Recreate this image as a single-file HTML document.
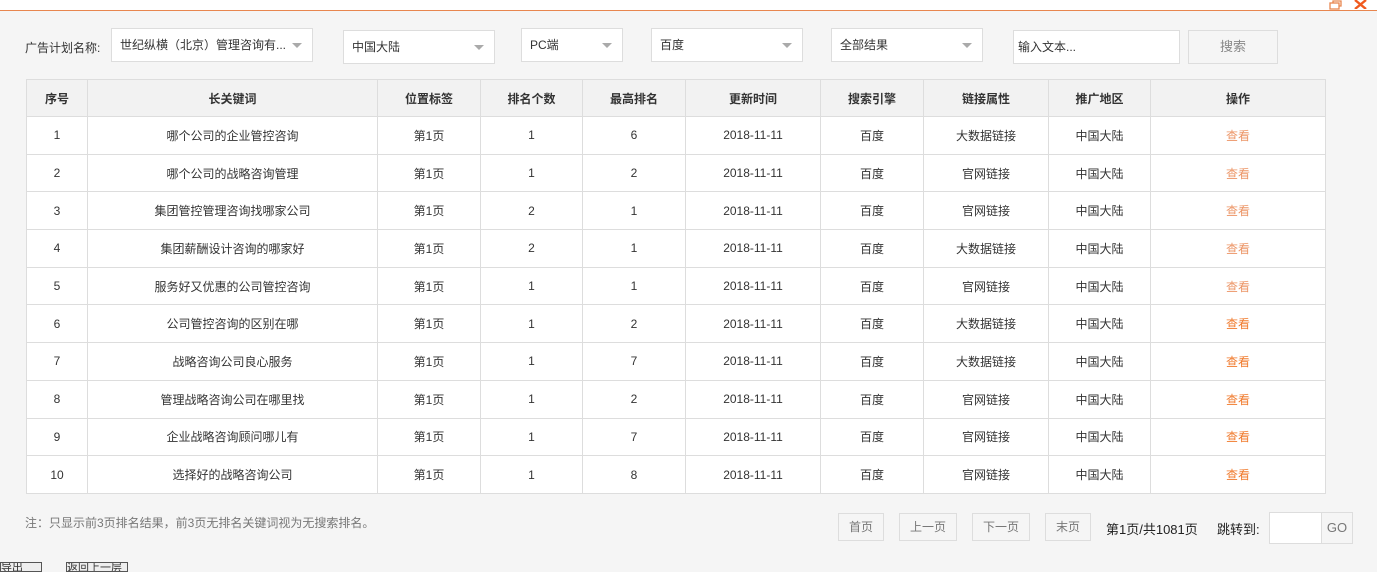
<!DOCTYPE html>
<html><head><meta charset="utf-8"><style>
*{box-sizing:border-box;margin:0;padding:0}
body{width:1377px;height:569px;overflow:hidden;background:#f5f5f5;font-family:"Liberation Sans","Noto Sans CJK SC",sans-serif;font-size:12px;color:#333;position:relative}
.top{position:absolute;left:0;top:0;width:1377px;height:11px;background:#fff;border-bottom:1px solid #e8864f}
.abs{position:absolute}
.sel{position:absolute;background:#fff;border:1px solid #ddd;height:34px;line-height:32px;padding-left:8px;font-size:12px;color:#333}
.sel:after{content:"";position:absolute;right:10px;top:14px;border-left:5px solid transparent;border-right:5px solid transparent;border-top:5px solid #aaa}
table{position:absolute;left:26px;top:79px;border-collapse:collapse;background:#fff}
td,th{border:1px solid #ddd;text-align:center;font-size:12px;color:#333;padding:0}
th{background:#f2f2f2;height:37px;font-weight:bold}
td{height:37.7px}
a{color:#f07a2c;text-decoration:none}
a.l{color:#ec9566}
.btn{position:absolute;border:1px solid #ddd;background:#f5f5f5;color:#777;text-align:center;height:28px;line-height:26px;font-size:12px}
</style></head><body>
<div class="top"></div>
<svg class="abs" style="left:1329px;top:0" width="14" height="10"><rect x="1" y="3" width="9" height="6" fill="none" stroke="#e8864f" stroke-width="1.3"/><path d="M4 3V1H12V6H10" fill="none" stroke="#e8864f" stroke-width="1.3"/></svg>
<svg class="abs" style="left:1354px;top:0" width="13" height="9"><path d="M1 0L12 9M12 0L1 9" stroke="#f05a1e" stroke-width="2.4"/></svg>
<div class="abs" style="left:25px;top:39px">广告计划名称:</div>
<div class="sel" style="left:111px;top:28px;width:202px">世纪纵横（北京）管理咨询有...</div>
<div class="sel" style="left:343px;top:30px;width:152px">中国大陆</div>
<div class="sel" style="left:521px;top:28px;width:102px">PC端</div>
<div class="sel" style="left:651px;top:28px;width:152px">百度</div>
<div class="sel" style="left:831px;top:28px;width:152px">全部结果</div>
<div class="abs" style="left:1013px;top:30px;width:167px;height:34px;background:#fff;border:1px solid #ddd;line-height:32px;padding-left:4px">输入文本...</div>
<div class="btn" style="left:1188px;top:30px;width:90px;height:34px;line-height:32px;font-size:13px;color:#888">搜索</div>
<table>
<tr><th style="width:61px">序号</th><th style="width:290px">长关键词</th><th style="width:103px">位置标签</th><th style="width:102px">排名个数</th><th style="width:103px">最高排名</th><th style="width:135px">更新时间</th><th style="width:103px">搜索引擎</th><th style="width:125px">链接属性</th><th style="width:102px">推广地区</th><th style="width:175px">操作</th></tr>
<tr><td>1</td><td>哪个公司的企业管控咨询</td><td>第1页</td><td>1</td><td>6</td><td>2018-11-11</td><td>百度</td><td>大数据链接</td><td>中国大陆</td><td><a class="l">查看</a></td></tr>
<tr><td>2</td><td>哪个公司的战略咨询管理</td><td>第1页</td><td>1</td><td>2</td><td>2018-11-11</td><td>百度</td><td>官网链接</td><td>中国大陆</td><td><a class="l">查看</a></td></tr>
<tr><td>3</td><td>集团管控管理咨询找哪家公司</td><td>第1页</td><td>2</td><td>1</td><td>2018-11-11</td><td>百度</td><td>官网链接</td><td>中国大陆</td><td><a class="l">查看</a></td></tr>
<tr><td>4</td><td>集团薪酬设计咨询的哪家好</td><td>第1页</td><td>2</td><td>1</td><td>2018-11-11</td><td>百度</td><td>大数据链接</td><td>中国大陆</td><td><a class="l">查看</a></td></tr>
<tr><td>5</td><td>服务好又优惠的公司管控咨询</td><td>第1页</td><td>1</td><td>1</td><td>2018-11-11</td><td>百度</td><td>官网链接</td><td>中国大陆</td><td><a class="l">查看</a></td></tr>
<tr><td>6</td><td>公司管控咨询的区别在哪</td><td>第1页</td><td>1</td><td>2</td><td>2018-11-11</td><td>百度</td><td>大数据链接</td><td>中国大陆</td><td><a>查看</a></td></tr>
<tr><td>7</td><td>战略咨询公司良心服务</td><td>第1页</td><td>1</td><td>7</td><td>2018-11-11</td><td>百度</td><td>大数据链接</td><td>中国大陆</td><td><a>查看</a></td></tr>
<tr><td>8</td><td>管理战略咨询公司在哪里找</td><td>第1页</td><td>1</td><td>2</td><td>2018-11-11</td><td>百度</td><td>官网链接</td><td>中国大陆</td><td><a>查看</a></td></tr>
<tr><td>9</td><td>企业战略咨询顾问哪儿有</td><td>第1页</td><td>1</td><td>7</td><td>2018-11-11</td><td>百度</td><td>官网链接</td><td>中国大陆</td><td><a>查看</a></td></tr>
<tr><td>10</td><td>选择好的战略咨询公司</td><td>第1页</td><td>1</td><td>8</td><td>2018-11-11</td><td>百度</td><td>官网链接</td><td>中国大陆</td><td><a>查看</a></td></tr>
</table>
<div class="abs" style="left:25px;top:514px;color:#777">注：只显示前3页排名结果，前3页无排名关键词视为无搜索排名。</div>
<div class="btn" style="left:838px;top:513px;width:46px">首页</div>
<div class="btn" style="left:899px;top:513px;width:58px">上一页</div>
<div class="btn" style="left:972px;top:513px;width:58px">下一页</div>
<div class="btn" style="left:1045px;top:513px;width:46px">末页</div>
<div class="abs" style="left:1106px;top:519px;font-size:13px;color:#222">第1页/共1081页</div>
<div class="abs" style="left:1217px;top:519px;font-size:13px;color:#222">跳转到:</div>
<div class="abs" style="left:1269px;top:512px;width:53px;height:32px;background:#fff;border:1px solid #ddd"></div>
<div class="btn" style="left:1321px;top:512px;width:32px;height:32px;line-height:30px;font-size:13px">GO</div>
<div class="abs" style="left:0;top:562px;width:42px;height:10px;border:1px solid #555;background:#eee;font-size:11px;line-height:10px;overflow:hidden">导出Excel</div>
<div class="abs" style="left:66px;top:562px;width:62px;height:10px;border:1px solid #555;background:#eee;font-size:11px;line-height:10px;overflow:hidden">返回上一层</div>
</body></html>
